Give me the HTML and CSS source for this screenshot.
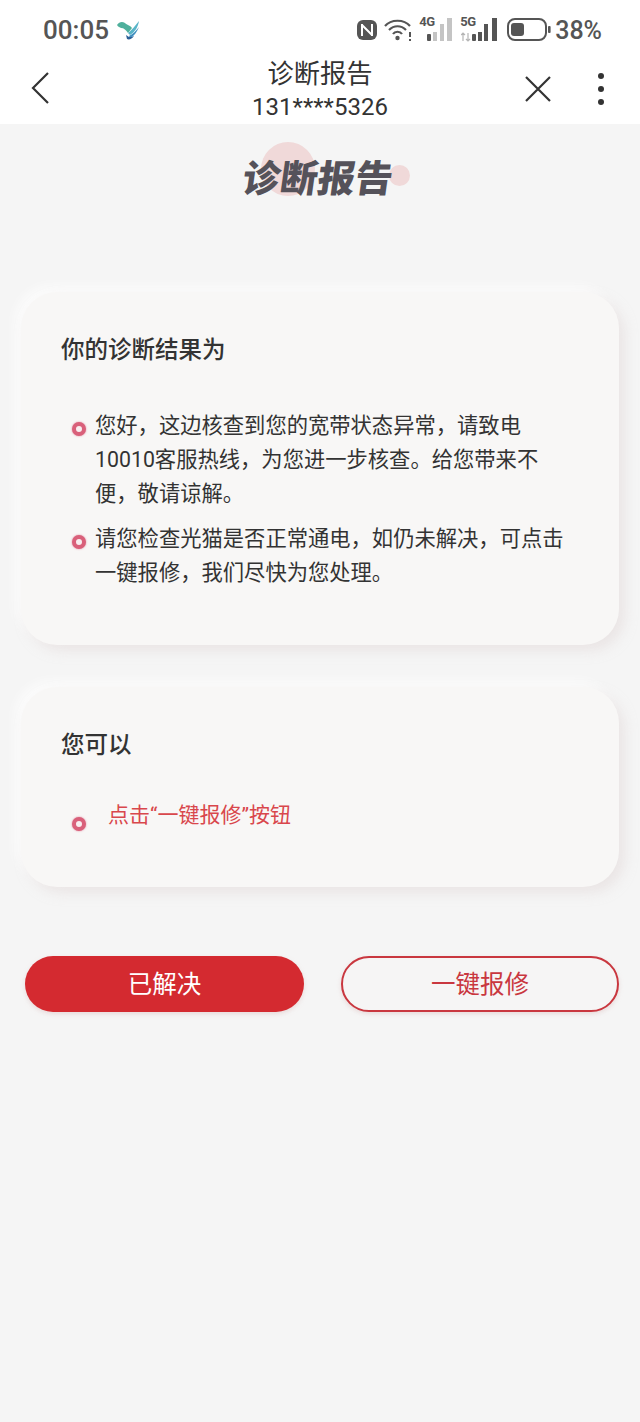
FILE: index.html
```html
<!DOCTYPE html>
<html lang="zh-CN">
<head>
  <meta charset="UTF-8" />
  <meta name="viewport" content="width=device-width, initial-scale=1.0" />
  <title>诊断报告</title>
  <link rel="stylesheet" href="styles.css">
</head>
<body>
  <header class="top">
    <div class="status">
      <div class="status-left">
        <span class="clock">00:05</span>
        <svg class="bird" width="24" height="22" viewBox="0 0 24 22">
          <path d="M1 6 C3 3 6 2 9 4 C11 6 14 6 16 9 L12 14 C10 11 8 9 5 9 C4 8 2 8 1 6Z" fill="#4fb09c"/>
          <path d="M23 2 C22 8 19 13 14 16 L12 14 C16 11 19 7 23 2Z" fill="#58b4c8"/>
          <path d="M23 8 C21 13 18 17 14 19 L13 17 C17 15 20 12 23 8Z" fill="#3f8fc0"/>
          <path d="M18 17 C16 20 13 21 11 20 L10 16 L13 18 C15 18 16 18 18 17Z" fill="#2c5f96"/>
        </svg>
      </div>
      <div class="status-right">
        <svg width="20" height="22" viewBox="0 0 20 22">
          <rect x="0" y="1" width="20" height="20" rx="6" fill="#555"/>
          <path d="M5 5 V17 M5 6 L15 16 M15 5 V17" stroke="#fff" stroke-width="2" fill="none"/>
        </svg>
        <svg width="28" height="24" viewBox="0 0 28 24">
          <path d="M1 8 C7 1 20 1 26 8 M5 12 C10 7 17 7 22 12 M9 16 C11 13 16 13 18 16" stroke="#555" stroke-width="2.2" fill="none"/>
          <circle cx="13.5" cy="20" r="2.2" fill="#555"/>
          <path d="M26 14 V19 M26 21 V23" stroke="#555" stroke-width="2"/>
        </svg>
        <div class="signal signal-4g">
          <span class="net">4G</span>
          <svg width="26" height="24" viewBox="0 0 26 24">
            <rect x="0" y="16" width="4" height="7" rx="1" fill="#555"/>
            <rect x="6" y="14" width="4" height="9" fill="#c4c4c4"/>
            <rect x="13" y="6" width="4" height="17" fill="#c4c4c4"/>
            <rect x="20" y="0" width="5" height="23" fill="#c4c4c4"/>
          </svg>
        </div>
        <div class="signal signal-5g">
          <span class="net">5G</span>
          <svg width="36" height="24" viewBox="0 0 36 24">
            <path d="M2 15 V23 M0 17 L2 15 L4 17 M7 15 V23 M5 21 L7 23 L9 21" stroke="#b5b5b5" stroke-width="1.2" fill="none"/>
            <rect x="11" y="16" width="4" height="7" rx="1" fill="#555"/>
            <rect x="17" y="14" width="4" height="9" fill="#555"/>
            <rect x="23" y="6" width="4" height="17" fill="#555"/>
            <rect x="31" y="0" width="5" height="23" fill="#555"/>
          </svg>
        </div>
        <svg class="battery" width="44" height="24" viewBox="0 0 44 24">
          <rect x="1" y="1" width="38" height="21" rx="7" fill="none" stroke="#555" stroke-width="2"/>
          <rect x="4" y="5" width="13" height="13" rx="3" fill="#555"/>
          <rect x="41" y="8" width="2.6" height="7" rx="1" fill="#555"/>
        </svg>
        <span class="percent">38%</span>
      </div>
    </div>
    <nav class="nav">
      <svg class="nav-back" width="20" height="34" viewBox="0 0 20 34">
        <path d="M18 2 L3 17 L18 32" stroke="#333" stroke-width="2.2" fill="none"/>
      </svg>
      <div class="nav-title">
        <div class="nav-name">诊断报告</div>
        <div class="nav-phone">131****5326</div>
      </div>
      <div class="nav-actions">
        <svg width="28" height="28" viewBox="0 0 28 28">
          <path d="M2 2 L26 26 M26 2 L2 26" stroke="#333" stroke-width="2.2" fill="none"/>
        </svg>
        <div class="dots"><i></i><i></i><i></i></div>
      </div>
    </nav>
  </header>

  <main class="content">
    <div class="banner">
      <span class="blob-big"></span>
      <span class="blob-small"></span>
      <h1>诊断报告</h1>
    </div>

    <section class="card card-result">
      <h2>你的诊断结果为</h2>
      <ul class="tips">
        <li>您好，这边核查到您的宽带状态异常，请致电10010客服热线，为您进一步核查。给您带来不便，敬请谅解。</li>
        <li>请您检查光猫是否正常通电，如仍未解决，可点击一键报修，我们尽快为您处理。</li>
      </ul>
    </section>

    <section class="card card-action">
      <h2>您可以</h2>
      <ul class="tips tips-red">
        <li>点击“一键报修”按钮</li>
      </ul>
    </section>

    <div class="buttons">
      <button class="btn btn-solid">已解决</button>
      <button class="btn btn-line">一键报修</button>
    </div>
  </main>
</body>
</html>
```

FILE: styles.css
```css
*, *::before {
  box-sizing: border-box;
}
html, body {
  margin: 0;
  padding: 0;
}
body {
  min-height: 1422px;
  background: #f5f5f5;
  font-family: "Roboto", "Noto Sans CJK SC", sans-serif;
  color: #333;
}
.top {
  background: #fff;
  height: 124px;
}
.status {
  display: flex;
  justify-content: space-between;
  align-items: center;
  height: 60px;
  padding: 0 38px 0 43px;
}
.status-left, .status-right {
  display: flex;
  align-items: center;
}
.status-right {
  gap: 7px;
}
.clock {
  font-size: 26px;
  font-weight: 500;
  color: #555;
}
.bird {
  margin-left: 7px;
}
.signal {
  position: relative;
  height: 24px;
  display: flex;
  justify-content: flex-end;
}
.signal-4g {
  width: 34px;
}
.signal-5g {
  width: 37px;
  margin-right: 3px;
}
.net {
  position: absolute;
  left: 0;
  top: -4px;
  font-size: 13px;
  font-weight: 700;
  letter-spacing: -0.5px;
  color: #555;
}
.percent {
  font-size: 25px;
  font-weight: 500;
  color: #555;
  margin-left: -3px;
}
.nav {
  display: grid;
  grid-template-columns: 1fr auto 1fr;
  align-items: start;
  height: 64px;
  padding: 0 36px 0 30px;
}
.nav-back {
  margin-top: 11px;
}
.nav-title {
  text-align: center;
  color: #333;
  margin-top: -1px;
  margin-left: 6px;
}
.nav-name {
  font-size: 26.3px;
  line-height: 30px;
}
.nav-phone {
  font-size: 24px;
  line-height: 34px;
  margin-top: 1px;
}
.nav-actions {
  display: flex;
  align-items: center;
  justify-content: flex-end;
  gap: 46px;
  margin-top: 13px;
}
.dots {
  display: flex;
  flex-direction: column;
  gap: 7px;
}
.dots i {
  display: block;
  width: 6px;
  height: 6px;
  border-radius: 50%;
  background: #333;
}
.content {
  padding: 0 21px;
}
.banner {
  position: relative;
  height: 168px;
  text-align: center;
}
.banner h1 {
  position: relative;
  display: inline-block;
  margin: 0;
  padding-top: 30px;
  font-size: 37.5px;
  line-height: 50px;
  font-weight: 900;
  transform: skewX(-8deg);
  color: #55525a;
}
.blob-big {
  position: absolute;
  left: 240px;
  top: 18px;
  width: 54px;
  height: 54px;
  border-radius: 50%;
  background: #f0d9d9;
}
.blob-small {
  position: absolute;
  left: 368px;
  top: 41px;
  width: 21px;
  height: 21px;
  border-radius: 50%;
  background: #f0d9d9;
}
.card {
  background: #f8f7f6;
  border-radius: 36px;
  padding: 40px 40px 0;
  box-shadow: 6px 6px 12px rgba(225, 215, 215, 0.5), -6px -6px 12px rgba(255, 255, 255, 0.7);
}
.card h2 {
  margin: 0;
  font-size: 23.5px;
  line-height: 36px;
  font-weight: 500;
  color: #333;
}
.card-result {
  height: 353px;
}
.card-action {
  height: 200px;
  margin-top: 42px;
}
.tips {
  list-style: none;
  margin: 0;
  padding: 0 5px 0 0;
}
.card-result .tips {
  margin-top: 41px;
}
.tips li {
  position: relative;
  padding-left: 34px;
  font-size: 21.3px;
  line-height: 34px;
  color: #333;
}
.tips li + li {
  margin-top: 11px;
}
.tips li::before {
  content: "";
  position: absolute;
  left: 11px;
  top: 13px;
  width: 14px;
  height: 14px;
  border-radius: 50%;
  border: 4px solid #d9607a;
  background: #f8eef0;
  box-shadow: 0 0 2px rgba(220, 100, 130, 0.8);
}
.tips-red {
  margin-top: 35px;
}
.tips-red li {
  padding-left: 47px;
  font-size: 21px;
  color: #d9474c;
}
.tips-red li::before {
  top: 19px;
}
.buttons {
  display: flex;
  justify-content: space-between;
  margin-top: 69px;
  padding-left: 4px;
}
.btn {
  width: 279px;
  height: 56px;
  padding: 0 0 4px;
  border-radius: 29px;
  font-family: inherit;
  font-size: 24.5px;
  box-shadow: 0 2px 4px rgba(225, 200, 200, 0.6);
}
.btn-solid {
  background: #d42a30;
  border: none;
  color: #fff;
}
.btn-line {
  width: 278px;
  background: #f6f5f5;
  border: 2px solid #c9373f;
  color: #c9373f;
}
```
